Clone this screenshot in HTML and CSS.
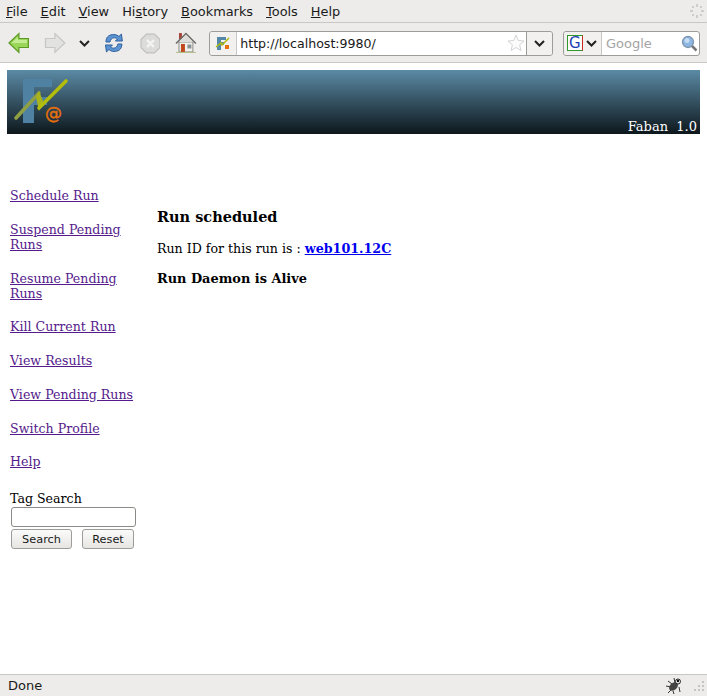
FILE: index.html
```html
<!DOCTYPE html>
<html lang="en">

<head>
    <meta charset="UTF-8">
    <title>Faban</title>
    <link rel="stylesheet" href="styles.css">
</head>

<body>

    <div class="menubar">
        <span class="menu"><u>F</u>ile</span>
        <span class="menu"><u>E</u>dit</span>
        <span class="menu"><u>V</u>iew</span>
        <span class="menu">Hi<u>s</u>tory</span>
        <span class="menu"><u>B</u>ookmarks</span>
        <span class="menu"><u>T</u>ools</span>
        <span class="menu"><u>H</u>elp</span>
        <svg class="throbber" width="16" height="16" viewBox="0 0 16 16" fill="#cdcdc9">
            <rect x="7" y="1" width="2" height="3" />
            <rect x="7" y="12" width="2" height="3" />
            <rect x="1" y="7" width="3" height="2" />
            <rect x="12" y="7" width="3" height="2" />
            <rect x="3" y="3" width="2" height="2" />
            <rect x="11" y="3" width="2" height="2" />
            <rect x="3" y="11" width="2" height="2" />
            <rect x="11" y="11" width="2" height="2" />
        </svg>
    </div>

    <div class="toolbar">
        <!-- back -->
        <svg class="tool-back" width="22" height="22" viewBox="0 0 22 22">
            <path d="M1 11 L11 1.500 V6.500 H20.500 V15.500 H11 V20.500 Z" fill="#9ad65a" stroke="#5b9a24" stroke-width="1.200" />
            <path d="M3.500 11 L10 5 V8 H19 V11 Z" fill="#c4ec94" />
        </svg>
        <!-- forward, disabled -->
        <svg class="tool-forward" width="22" height="22" viewBox="0 0 22 22">
            <path d="M21 11 L11 1.500 V6.500 H1.500 V15.500 H11 V20.500 Z" fill="#e2e2e0" stroke="#c6c6c4" stroke-width="1.200" />
        </svg>
        <svg class="tool-history" width="11" height="7" viewBox="0 0 11 7">
            <path d="M1 1 L5.500 5.500 L10 1" fill="none" stroke="#222" stroke-width="2" />
        </svg>
        <!-- reload -->
        <svg class="tool-reload" width="20" height="22" viewBox="0 0 20 22">
            <path d="M2 10 C2 4 6 2.500 10 2.500 C12.500 2.500 14 3.500 15 4.500 L17.500 2 L18.500 9 L11.500 9 L13.500 7 C12.500 6 11 5.800 10 5.800 C8 5.800 6.500 7.500 6 10 Z" fill="#5c93d0" stroke="#2c5f9e" />
            <path d="M18 12 C18 18 14 19.500 10 19.500 C7.500 19.500 6 18.500 5 17.500 L2.500 20 L1.500 13 L8.500 13 L6.500 15 C7.500 16 9 16.200 10 16.200 C12 16.200 13.500 14.500 14 12 Z" fill="#5c93d0" stroke="#2c5f9e" />
        </svg>
        <!-- stop, disabled -->
        <svg class="tool-stop" width="21" height="21" viewBox="0 0 21 21">
            <path d="M6.500 1 H14.500 L20 6.500 V14.500 L14.500 20 H6.500 L1 14.500 V6.500 Z" fill="#dcdcda" stroke="#c0c0be" stroke-width="1.200" />
            <path d="M7 7 L14 14 M14 7 L7 14" stroke="#f4f4f2" stroke-width="2.400" />
        </svg>
        <!-- home -->
        <svg class="tool-home" width="22" height="22" viewBox="0 0 22 22">
            <rect x="4" y="1" width="3" height="6" fill="#a8453a" />
            <path d="M4 10 H18 V20 H4 Z" fill="#f0f0ec" stroke="#8a8a86" />
            <path d="M1 11.500 L11 1.500 L21 11.500" fill="none" stroke="#6c6c68" stroke-width="1.600" />
            <path d="M11 3 L4 10 H18 Z" fill="#dcdcd8" />
            <rect x="6" y="12" width="4" height="8" fill="#c0481c" />
            <rect x="12.500" y="12.500" width="4" height="4" fill="#8a8f90" />
            <rect x="1" y="20" width="20" height="1" fill="#b4c088" />
        </svg>

        <div class="urlbar">
            <div class="favicon-box">
                <svg width="16" height="16" viewBox="0 0 16 16">
                    <path d="M2 2 H11 V5 H6 V7 H9 V10 H6 V15 H2 Z" fill="#5487a8" />
                    <path d="M1 12 L6 8 L7 10 L14 3" fill="none" stroke="#b0bc10" stroke-width="1.500" />
                    <rect x="10" y="10" width="4" height="4" fill="#e8700c" />
                </svg>
            </div>
            <span class="url-text">http://localhost:9980/</span>
            <svg class="star" width="18" height="18" viewBox="0 0 18 18">
                <path d="M9 1 L11.300 6.500 L17 7 L12.600 10.800 L14 16.500 L9 13.500 L4 16.500 L5.400 10.800 L1 7 L6.700 6.500 Z" fill="#fbfbfb" stroke="#d4d4d4" />
            </svg>
            <div class="drop-box">
                <svg width="11" height="7" viewBox="0 0 11 7">
                    <path d="M1 1 L5.500 5.500 L10 1" fill="none" stroke="#222" stroke-width="2" />
                </svg>
            </div>
        </div>

        <div class="searchbar">
            <div class="engine-box">
                <span class="engine-logo">G</span>
                <svg width="11" height="7" viewBox="0 0 11 7">
                    <path d="M1 1 L5.500 5.500 L10 1" fill="none" stroke="#222" stroke-width="2" />
                </svg>
            </div>
            <span class="search-text">Google</span>
            <svg class="search-glass" width="17" height="17" viewBox="0 0 17 17">
                <path d="M10.500 10.500 L15.500 15.500" stroke="#77777a" stroke-width="2.500" />
                <circle cx="7" cy="7" r="5.500" fill="#8db7e2" stroke="#7d94ad" stroke-width="1.300" />
                <circle cx="6" cy="5.500" r="2.500" fill="#c4dcf4" />
            </svg>
        </div>
    </div>

    <div class="page">
        <div class="banner">
            <svg class="logo" width="62" height="62" viewBox="0 0 62 62">
                <path d="M15 9 H43 V17 H25 V27 H38 V35 H25 V53 H14 V10 Z" fill="#4f81a2" />
                <path d="M7 48 L30 23" fill="none" stroke="#8f9f44" stroke-width="3.600" stroke-linecap="round" />
                <path d="M30 21 L34 31 L30 41 L27 27 Z" fill="#a9b41a" />
                <path d="M30 38 L57 11" fill="none" stroke="#b4bc0c" stroke-width="3.600" stroke-linecap="round" />
                <text class="logo-at" x="36" y="49">@</text>
            </svg>
            <span class="version">Faban&nbsp; 1.0</span>
        </div>

        <div class="content">
            <div class="sidebar">
                <a href="#">Schedule Run</a>
                <a href="#">Suspend Pending Runs</a>
                <a href="#">Resume Pending Runs</a>
                <a href="#">Kill Current Run</a>
                <a href="#">View Results</a>
                <a href="#">View Pending Runs</a>
                <a href="#">Switch Profile</a>
                <a href="#">Help</a>
                <div class="tag-search">
                    <div>Tag Search</div>
                    <input type="text" class="tag-input">
                    <div class="tag-buttons">
                        <button class="search-btn">Search</button>
                        <button class="reset-btn">Reset</button>
                    </div>
                </div>
            </div>

            <div class="main">
                <h3>Run scheduled</h3>
                <p>Run ID for this run is : <a class="run-link" href="#">web101.12C</a></p>
                <p class="alive">Run Daemon is Alive</p>
            </div>
        </div>
    </div>

    <div class="statusbar">
        <span>Done</span>
        <svg class="bug" width="18" height="18" viewBox="0 0 18 18">
            <path d="M3 4 L7 7 M1 9 L6 10 M3 16 L7 12 M9 1 L10 6 M14 10 L15 15 M8 14 L9 17" stroke="#333" stroke-width="1" />
            <ellipse cx="8.500" cy="9.500" rx="5" ry="3.500" transform="rotate(-40 8.500 9.500)" fill="#444" />
            <circle cx="13" cy="4.500" r="2.500" fill="#fff" stroke="#222" />
            <circle cx="13" cy="4" r="1.300" fill="#111" />
        </svg>
        <svg class="grip" width="12" height="12" viewBox="0 0 12 12" fill="#c4c4c0">
            <rect x="9" y="1" width="2" height="2" />
            <rect x="9" y="5" width="2" height="2" />
            <rect x="5" y="5" width="2" height="2" />
            <rect x="9" y="9" width="2" height="2" />
            <rect x="5" y="9" width="2" height="2" />
            <rect x="1" y="9" width="2" height="2" />
        </svg>
    </div>

</body>

</html>
```

FILE: styles.css
```css
html,
body {
    height: 100%;
}

body {
    margin: 0;
    display: flex;
    flex-direction: column;
    font-family: "DejaVu Sans", sans-serif;
    font-size: 13px;
    color: #1a1a1a;
    background-color: #fff;
    overflow: hidden;
}

/* Browser chrome */
.menubar {
    display: flex;
    align-items: center;
    height: 22px;
    padding: 0 6px;
    gap: 13px;
    font-size: 12.9px;
    background-color: #edecea;
    border-bottom: 1px solid #c8c7c4;
    flex-shrink: 0;
}

.throbber {
    margin-left: auto;
    margin-right: -4px;
}

.toolbar {
    display: flex;
    align-items: center;
    box-sizing: border-box;
    height: 40px;
    padding: 1px 7px 0;
    background-color: #edecea;
    border-bottom: 1px solid #c8c7c4;
    flex-shrink: 0;
}

.tool-back {
    margin-left: 1px;
}

.tool-forward {
    margin-left: 14px;
}

.tool-history {
    margin-left: 13px;
}

.tool-reload {
    margin-left: 14px;
}

.tool-stop {
    margin-left: 16px;
}

.tool-home {
    margin-left: 15px;
}

.urlbar,
.searchbar {
    display: flex;
    align-items: center;
    height: 23px;
    background-color: #fff;
    border: 1px solid #9c9c98;
    border-radius: 3px;
}

.urlbar {
    width: 344px;
    margin-left: 12px;
}

.favicon-box {
    display: flex;
    align-items: center;
    justify-content: center;
    width: 26px;
    height: 100%;
    background-color: #f2f1ef;
    border-right: 1px solid #c8c7c4;
    border-radius: 3px 0 0 3px;
}

.url-text {
    margin-left: 3px;
    font-size: 12.6px;
    color: #1a1a1a;
}

.star {
    margin-left: auto;
    margin-right: 1px;
}

.drop-box {
    display: flex;
    align-items: center;
    justify-content: center;
    width: 25px;
    height: 100%;
    background-color: #f2f1ef;
    border-left: 1px solid #9c9c98;
    border-radius: 0 3px 3px 0;
}

.searchbar {
    width: 136px;
    margin-left: 10px;
}

.engine-box {
    display: flex;
    align-items: center;
    gap: 3px;
    width: 38px;
    height: 100%;
    padding-left: 3px;
    box-sizing: border-box;
    background-color: #f2f1ef;
    border-right: 1px solid #c8c7c4;
    border-radius: 3px 0 0 3px;
}

.engine-logo {
    display: flex;
    align-items: center;
    justify-content: center;
    box-sizing: border-box;
    width: 16px;
    height: 16px;
    font-family: "DejaVu Sans", sans-serif;
    font-size: 15px;
    line-height: 14px;
    color: #1c3fb4;
    background-color: #fff;
    border: 1px solid #2f9a2a;
    border-right-color: #c8281e;
}

.search-text {
    margin-left: 4px;
    color: #a4a4a4;
}

.search-glass {
    margin-left: auto;
    margin-right: 1px;
}

/* Page */
.page {
    flex: 1;
    min-height: 0;
    padding: 7px 7px 0;
    font-family: "DejaVu Serif", serif;
    font-size: 12.6px;
    color: #000;
}

.banner {
    position: relative;
    height: 64px;
    background: linear-gradient(#5b8aa5, #0d171c);
}

.logo {
    display: block;
    margin-left: 2px;
}

.logo-at {
    font-family: "DejaVu Sans", sans-serif;
    font-size: 17px;
    fill: #e8700c;
    stroke: #e8700c;
    stroke-width: 0.4;
}

.version {
    position: absolute;
    right: 3px;
    bottom: 0;
    font-size: 13px;
    color: #fff;
}

.content {
    display: flex;
    padding-top: 54px;
}

.sidebar {
    display: flex;
    flex-direction: column;
    align-items: flex-start;
    gap: 18.75px;
    width: 126px;
    margin-left: 3px;
    line-height: 15px;
}

.sidebar a {
    color: #551a8b;
}

.tag-search {
    margin-top: 3px;
    color: #000;
}

.tag-input {
    display: block;
    box-sizing: border-box;
    width: 125px;
    height: 20px;
    margin: 1px 0 2px 1px;
    border: 1px solid #8a8a86;
    border-radius: 3px;
}

.tag-buttons {
    display: flex;
    gap: 10px;
    margin-left: 1px;
}

.tag-buttons button {
    height: 20px;
    padding: 1px 0 0;
    font-family: "DejaVu Sans", sans-serif;
    font-size: 11.3px;
    color: #1a1a1a;
    background: linear-gradient(#fbfbfa, #e6e5e2);
    border: 1px solid #9c9c98;
    border-radius: 3px;
}

.search-btn {
    width: 61px;
}

.reset-btn {
    width: 52px;
}

.main {
    margin-left: 21px;
    padding-top: 20px;
}

.main h3 {
    margin: 0 0 15px;
    font-size: 14.5px;
    line-height: 18px;
}

.main p {
    margin: 0 0 15px;
    line-height: 15px;
}

.main .alive {
    font-size: 12.9px;
    font-weight: bold;
}

.run-link {
    font-size: 12.7px;
    font-weight: bold;
    color: #0000ee;
}

/* Status bar */
.statusbar {
    display: flex;
    align-items: center;
    height: 21px;
    padding: 0 2px 0 8px;
    background-color: #edecea;
    border-top: 1px solid #c8c7c4;
    flex-shrink: 0;
}

.bug {
    margin-left: auto;
    margin-right: 10px;
}
```
